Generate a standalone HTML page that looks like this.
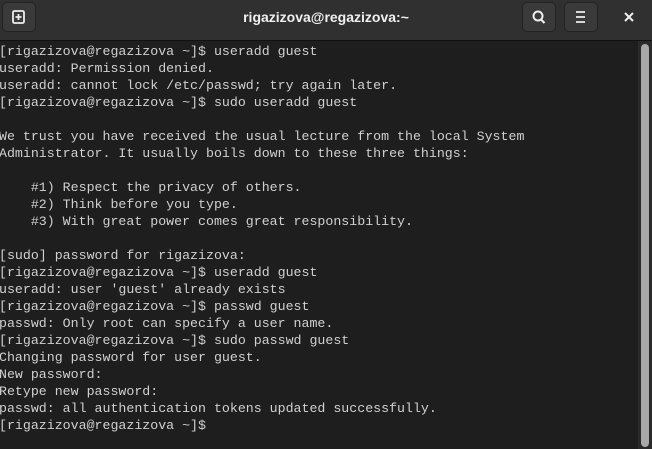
<!DOCTYPE html>
<html><head><style>
body{margin:0;width:652px;height:449px;background:#1e1e1e;overflow:hidden;position:relative;font-family:"Liberation Sans",sans-serif}
.hd{position:absolute;left:0;top:0;width:652px;height:40px;background:#303030;border-bottom:1px solid #111}
.btn{position:absolute;top:2px;height:30px;background:#3a3a3a;border-radius:5px;border:1px solid #232323;box-sizing:border-box}
.title{position:absolute;left:0;right:0;top:9px;text-align:center;color:#f0f0f0;font-weight:bold;font-size:14px}
pre{position:absolute;left:-1px;top:43px;margin:0;color:#d0d0d0;font-family:"Liberation Mono",monospace;font-size:13.27px;line-height:17px}
.sb{position:absolute;left:641px;top:44px;width:8px;height:403px;background:#a8a8a8;border-radius:4px}
.sbt{position:absolute;left:638px;top:41px;width:14px;height:408px;background:#2a2a2a}
</style></head><body>
<div class="hd">
<div class="btn" style="left:2px;width:34px"><svg width="34" height="30" style="position:absolute;left:-1px;top:-1px"><rect x="11" y="9" width="11" height="12" rx="1.5" fill="none" stroke="#eee" stroke-width="1.8"/><path d="M16.5 12v6M13.5 15h6" stroke="#eee" stroke-width="1.8"/></svg></div>
<div class="title">rigazizova@regazizova:~</div>
<div class="btn" style="left:522px;width:34px"><svg width="34" height="30" style="position:absolute;left:-1px;top:-1px"><circle cx="16" cy="14" r="4.5" fill="none" stroke="#eee" stroke-width="2"/><path d="M19 17.5l3.5 3.5" stroke="#eee" stroke-width="2.2"/></svg></div>
<div class="btn" style="left:564px;width:34px"><svg width="34" height="30" style="position:absolute;left:-1px;top:-1px"><path d="M12 10h9M12 15h9M12 20h9" stroke="#eee" stroke-width="1.8"/></svg></div>
<svg width="14" height="14" style="position:absolute;left:622px;top:10px"><path d="M3 3l8 8M11 3l-8 8" stroke="#eee" stroke-width="2"/></svg>
</div>
<div class="sbt"></div><div class="sb"></div>
<pre>[rigazizova@regazizova ~]$ useradd guest
useradd: Permission denied.
useradd: cannot lock /etc/passwd; try again later.
[rigazizova@regazizova ~]$ sudo useradd guest

We trust you have received the usual lecture from the local System
Administrator. It usually boils down to these three things:

    #1) Respect the privacy of others.
    #2) Think before you type.
    #3) With great power comes great responsibility.

[sudo] password for rigazizova:
[rigazizova@regazizova ~]$ useradd guest
useradd: user 'guest' already exists
[rigazizova@regazizova ~]$ passwd guest
passwd: Only root can specify a user name.
[rigazizova@regazizova ~]$ sudo passwd guest
Changing password for user guest.
New password:
Retype new password:
passwd: all authentication tokens updated successfully.
[rigazizova@regazizova ~]$</pre>
</body></html>
